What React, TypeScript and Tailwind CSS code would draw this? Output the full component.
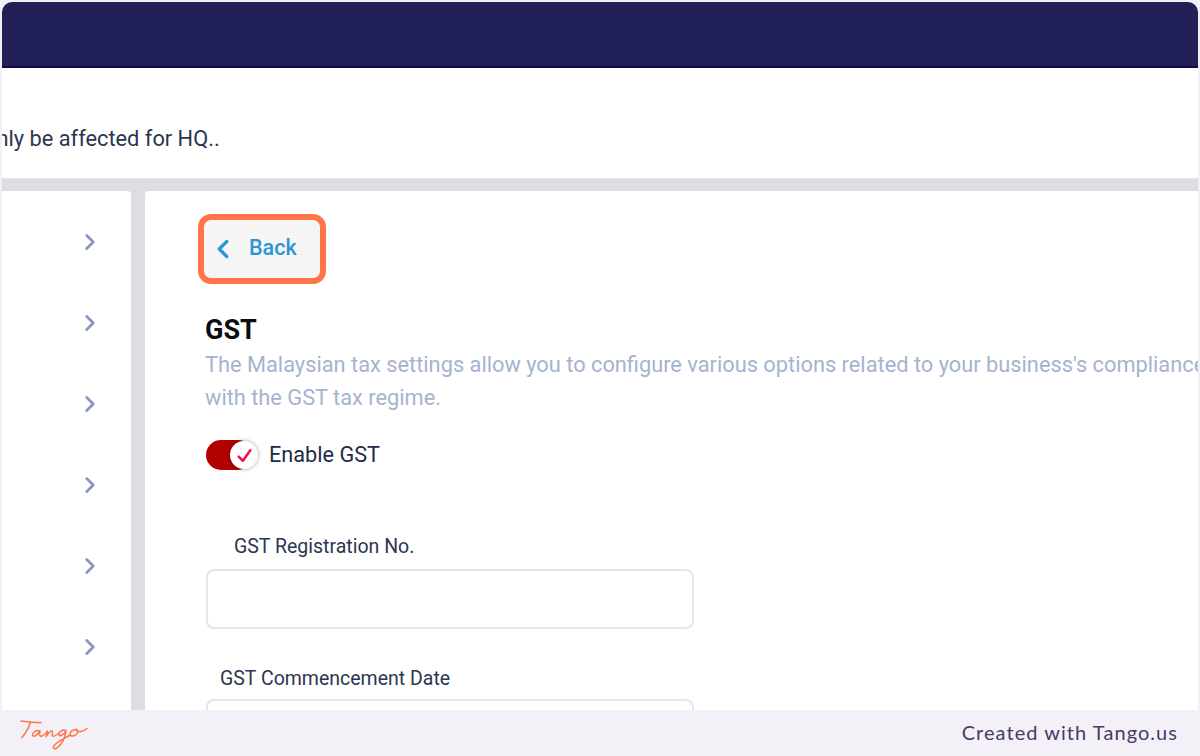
import { ChevronLeft, ChevronRight } from "lucide-react"

const sideRows = [0, 1, 2, 3, 4, 5]

function TangoLogo() {
  return (
    <svg width="70" height="32" viewBox="0 0 70 32" fill="none" stroke="#ff7448" strokeWidth="1.5" strokeLinecap="round" strokeLinejoin="round">
      <path d="M1 3 C8 4 14 4.6 21 4.8" />
      <path d="M10.5 4 C9 9 6 15 1.8 19.5" />
      <path d="M20 13 C17 11.5 12.5 14 12.5 17 C12.5 19.5 17 18 20 13 C19 16 19.5 19 22 18 C24.5 17 26.5 15 27.5 13 C27.5 15 26.5 17 26 18.5 C28 15.5 30.5 13 32 13 C33 13.5 32 17 32.5 18 C33.5 19 36.5 17 39 15" />
      <path d="M46 12.5 C42.5 11 38.5 14 39 17 C39.5 19 44 17 46 12.5 C45.5 18 42.5 26 37 30 C33.5 32 32 29.5 35 26.5 C38.5 23 44.5 20.5 50 17" />
      <path d="M57 11.5 C53 11 49.5 14 50 16.5 C50.5 19 55.5 18.5 57.5 15 C58 13 57 11.5 56 12 C58 14.5 63 14 67 10.5" />
    </svg>
  )
}

export default function App() {
  return (
    <div className="h-[756px] w-[1200px] overflow-hidden bg-[#f3f1f7] font-['Roboto',sans-serif]">
      <div className="mx-[2px] mt-[2px] flex h-[708px] flex-col overflow-hidden rounded-t-[10px] bg-white">
        <div className="h-[66px] shrink-0 border-b-2 border-[#0d0a4f] bg-[#222058]" />

        <div className="flex h-[110px] shrink-0 items-start overflow-hidden pt-[59px]">
          <span className="ml-[-18px] whitespace-nowrap text-[21.8px] leading-[24px] text-[#2c3650]">only be affected for HQ..</span>
        </div>

        <div className="flex min-h-0 flex-1 border-t border-[#e6e7e9] bg-[#dcdee1] pt-[12px]">
          <aside className="flex w-[129px] shrink-0 flex-col items-end rounded-tr-[4px] bg-white pr-[28px] pt-[41px]">
            {sideRows.map((row) => (
              <div key={row} className="mb-[61px] flex h-[20px] items-center text-[#8a97bd]">
                <ChevronRight size={26} strokeWidth={2.6} className="shrink-0" />
              </div>
            ))}
          </aside>

          <main className="ml-[14px] min-w-0 flex-1 overflow-hidden rounded-tl-[4px] bg-white pl-[61px] pt-[23px]">
            <button className="-ml-[8px] flex h-[70px] w-[128px] items-center rounded-[13px] border-[6px] border-[#ff7448] bg-[#f5f5f5] pl-[4px] text-[21.5px] font-medium text-[#2b95d6]">
              <ChevronLeft size={30} strokeWidth={2.6} className="shrink-0" />
              <span className="ml-[11px] -translate-y-[1px]">Back</span>
            </button>

            <h1 className="-ml-[1px] mt-[31px] text-[27px] font-bold leading-[30px] text-[#0b0b10]">GST</h1>
            <p className="-ml-[1px] mt-[3px] whitespace-nowrap text-[21.8px] leading-[33px] text-[#a5b3d0]">
              The Malaysian tax settings allow you to configure various options related to your business's compliance
              <br />
              with the GST tax regime.
            </p>

            <div className="mt-[26px] flex items-center">
              <div className="flex h-[30px] w-[47px] items-center justify-end rounded-full bg-[#b20000]">
                <div className="-mr-[5px] flex h-[28px] w-[28px] shrink-0 items-center justify-center rounded-full bg-white shadow-[0_0_4px_rgba(0,0,0,0.35)]">
                  <svg width="17" height="17" viewBox="0 0 16 16" fill="none" stroke="#f0134f" strokeWidth="2.4" strokeLinecap="round" strokeLinejoin="round">
                    <path d="M2.5 9 L6.5 13 L13.5 3" />
                  </svg>
                </div>
              </div>
              <span className="ml-[16px] text-[21.7px] leading-[24px] text-[#222b45]">Enable GST</span>
            </div>

            <label className="mt-[65px] block pl-[28px] text-[19.5px] leading-[24px] text-[#2c3650]">GST Registration No.</label>
            <input className="mt-[10px] block h-[60px] w-[488px] rounded-[8px] border-2 border-[#e5e6e8] bg-white" />

            <label className="mt-[38px] block pl-[14px] text-[19.5px] leading-[24px] text-[#2c3650]">GST Commencement Date</label>
            <input className="mt-[8px] block h-[60px] w-[488px] rounded-[8px] border-2 border-[#e5e6e8] bg-white" />
          </main>
        </div>
      </div>

      <footer className="flex h-[46px] items-center justify-between pl-[20px] pr-[22px]">
        <div className="mt-[2px]">
          <TangoLogo />
        </div>
        <span className="-translate-y-[1px] font-['Lato',sans-serif] text-[20px] tracking-[1.05px] text-[#4a3a66]">Created with Tango.us</span>
      </footer>
    </div>
  )
}
